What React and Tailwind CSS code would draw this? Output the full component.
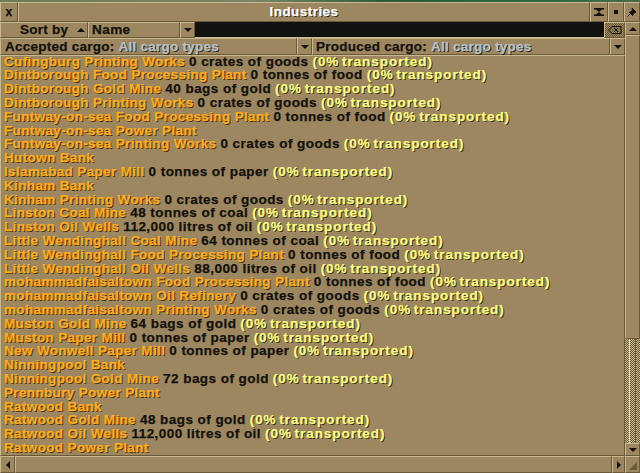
const bevel = 'border border-t-[#c8b88f] border-l-[#c8b88f] border-r-[#6b5a38] border-b-[#6b5a38] bg-[#9c8760]';

const NAME = 'text-[#ffac1c] tracking-[0.35px] [text-shadow:1px_1px_0_#3c2c08]';
const INFO = 'text-[#14110a]';
const PCT = 'text-[#fcfc84] tracking-[0.95px] [word-spacing:-2px] [text-shadow:1px_1px_0_#2c240c]';
const GREY = 'text-[#b8c0cc] [text-shadow:1px_1px_0_#2c240c]';

const rows = [
  ['Cufingburg Printing Works', '0 crates of goods', true],
  ['Dintborough Food Processing Plant', '0 tonnes of food', true],
  ['Dintborough Gold Mine', '40 bags of gold', true],
  ['Dintborough Printing Works', '0 crates of goods', true],
  ['Funtway-on-sea Food Processing Plant', '0 tonnes of food', true],
  ['Funtway-on-sea Power Plant'],
  ['Funtway-on-sea Printing Works', '0 crates of goods', true],
  ['Hutown Bank'],
  ['Islamabad Paper Mill', '0 tonnes of paper', true],
  ['Kinham Bank'],
  ['Kinham Printing Works', '0 crates of goods', true],
  ['Linston Coal Mine', '48 tonnes of coal', true],
  ['Linston Oil Wells', '112,000 litres of oil', true],
  ['Little Wendinghall Coal Mine', '64 tonnes of coal', true],
  ['Little Wendinghall Food Processing Plant', '0 tonnes of food', true],
  ['Little Wendinghall Oil Wells', '88,000 litres of oil', true],
  ['mohammadfaisaltown Food Processing Plant', '0 tonnes of food', true],
  ['mohammadfaisaltown Oil Refinery', '0 crates of goods', true],
  ['mohammadfaisaltown Printing Works', '0 crates of goods', true],
  ['Muston Gold Mine', '64 bags of gold', true],
  ['Muston Paper Mill', '0 tonnes of paper', true],
  ['New Wonwell Paper Mill', '0 tonnes of paper', true],
  ['Ninningpool Bank'],
  ['Ninningpool Gold Mine', '72 bags of gold', true],
  ['Prennbury Power Plant'],
  ['Ratwood Bank'],
  ['Ratwood Gold Mine', '48 bags of gold', true],
  ['Ratwood Oil Wells', '112,000 litres of oil', true],
  ['Ratwood Power Plant'],
];

const Down = () => <span className="w-0 h-0 border-x-[4px] border-x-transparent border-t-[4px] border-t-[#14110a]" />;
const Up = () => <span className="w-0 h-0 border-x-[4px] border-x-transparent border-b-[4px] border-b-[#14110a]" />;

export default function App() {
  return (
    <div className="w-[640px] h-[473px] overflow-hidden flex flex-col bg-[#9c8760] font-['Liberation_Sans',sans-serif] font-bold text-[13.5px] tracking-[0.45px] leading-none [-webkit-text-stroke:0.25px_currentColor]">
      <div className="h-[2px] shrink-0 bg-[linear-gradient(90deg,#6f7a58_0%,#7d8666_40%,#2e5a34_60%,#2b6a3e_85%,#4d6a45_100%)]" />
      <div className="h-[20px] shrink-0 flex">
        <div className={`${bevel} w-[18px] flex items-center justify-center text-[#14110a] text-[12px]`}>x</div>
        <div className={`${bevel} flex-1 flex items-center justify-center text-white [text-shadow:1px_1px_0_#2c240c]`}>Industries</div>
        <div className={`${bevel} w-[18px] flex items-center justify-center`}>
          <svg width="10" height="8" viewBox="0 0 10 8"><path d="M0 0h10v1.500H0zM0 6.500h10V8H0zM2 1.500h6L5 4zM2 6.500h6L5 4z" fill="#14110a" /></svg>
        </div>
        <div className={`${bevel} w-[16px] flex items-center justify-center`}>
          <span className="w-[4px] h-[4px] bg-[#14110a]" />
        </div>
        <div className={`${bevel} w-[16px] flex items-center justify-center`}>
          <svg width="10" height="10" viewBox="0 0 10 10"><path d="M5 1l4 4-1 .5-2 2-.5 1L2.500 5.500l1-.5 2-2zM3.500 6.500L.5 9.500" fill="#14110a" stroke="#14110a" /></svg>
        </div>
      </div>
      <div className="flex-1 flex min-h-0">
        <div className="flex-1 flex flex-col min-w-0">
          <div className="h-[16px] shrink-0 flex">
            <div className={`${bevel} w-[88px] flex items-center pl-[19px] text-[#14110a]`}>
              <span className="tracking-[0.25px]">Sort by</span>
              <span className="ml-[9px] flex"><Up /></span>
            </div>
            <div className={`${bevel} w-[92px] flex items-center pl-[3px] text-[#14110a]`}>Name</div>
            <div className={`${bevel} w-[15px] flex items-center justify-center`}><Down /></div>
            <div className="flex-1 bg-[#111111] border-b border-b-[#c8b88f]" />
            <div className={`${bevel} w-[21px] flex items-center justify-center bg-[repeating-conic-gradient(#6b5a38_0_25%,#9c8760_0_50%)] bg-[length:2px_2px]`}>
              <svg width="14" height="8" viewBox="0 0 14 8"><path d="M4 .5h9v7H4L.5 4zM6 2l4 4M10 2L6 6" fill="none" stroke="#14110a" /></svg>
            </div>
          </div>
          <div className="h-[17px] shrink-0 flex tracking-[0.25px]">
            <div className={`${bevel} w-[297px] flex items-center pl-[4px] text-[#14110a]`}>
              Accepted cargo:&nbsp;
              <span className={GREY}>All cargo types</span>
            </div>
            <div className={`${bevel} w-[15px] flex items-center justify-center`}><Down /></div>
            <div className={`${bevel} flex-1 flex items-center pl-[3px] text-[#14110a]`}>
              Produced cargo:&nbsp;
              <span className={GREY}>All cargo types</span>
            </div>
            <div className={`${bevel} w-[15px] flex items-center justify-center`}><Down /></div>
          </div>
          <div className={`${bevel} flex-1 min-h-0 overflow-hidden pl-[3px]`}>
            <div className="-mt-[1.5px]">
              {rows.map(([name, info, pct]) => (
                <div key={name} className="h-[13.8px] whitespace-nowrap flex items-center gap-[4px]">
                  <span className={NAME}>{name}</span>
                  {info && <span className={INFO}>{info}</span>}
                  {pct && <span className={PCT}>(0% transported)</span>}
                </div>
              ))}
            </div>
          </div>
        </div>
        <div className="w-[15px] shrink-0 flex flex-col">
          <div className={`${bevel} h-[13px] shrink-0 flex items-center justify-center`}><Up /></div>
          <div className={`${bevel} h-[304px] shrink-0`} />
          <div className="flex-1 flex justify-center bg-[repeating-conic-gradient(#6b5a38_0_25%,#c8b88f_0_50%)] bg-[length:2px_2px]">
            <span className="w-[1px] bg-[#e8d8a8] mr-[5px]" />
            <span className="w-[1px] bg-[#6b5a38]" />
          </div>
          <div className={`${bevel} h-[13px] shrink-0 flex items-center justify-center`}><Down /></div>
        </div>
      </div>
      <div className="h-[17px] shrink-0 flex">
        <div className={`${bevel} w-[15px] flex items-center justify-center`}>
          <span className="w-0 h-0 border-y-[4px] border-y-transparent border-r-[4px] border-r-[#14110a]" />
        </div>
        <div className={`${bevel} flex-1`} />
        <div className={`${bevel} w-[13px] flex items-center justify-center`}>
          <span className="w-0 h-0 border-y-[4px] border-y-transparent border-l-[4px] border-l-[#14110a]" />
        </div>
        <div className={`${bevel} w-[15px] flex items-end justify-end p-[2px]`}>
          <span className="w-0 h-0 border-l-[8px] border-l-transparent border-b-[8px] border-b-[#6b5a38]" />
        </div>
      </div>
    </div>
  );
}
